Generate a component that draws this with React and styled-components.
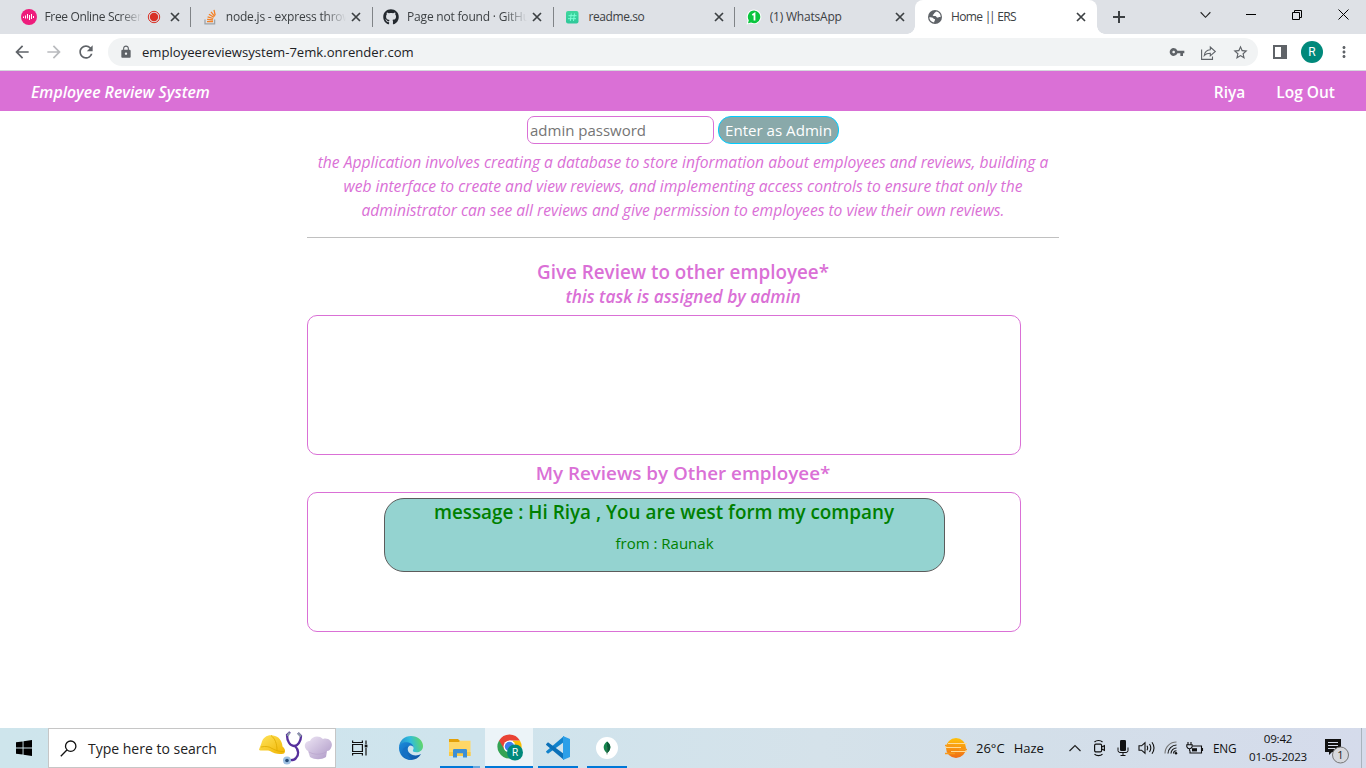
import React from 'react';
import styled, { createGlobalStyle, css } from 'styled-components';
import {
  MdArrowBack, MdArrowForward, MdRefresh, MdLock, MdVpnKey, MdStarBorder, MdMoreVert,
} from 'react-icons/md';
import { FaGithub } from 'react-icons/fa';

const Global = createGlobalStyle`
  * { box-sizing: border-box; }
  body { margin: 0; background: #fff; font-family: "Open Sans", "Noto Sans", sans-serif; overflow: hidden; }
  svg { display: block; flex: none; }
`;

const Screen = styled.div`
  width: 1366px;
  height: 768px;
  display: flex;
  flex-direction: column;
  background: #fff;
`;

/* ---------- browser ---------- */
const TabStrip = styled.div`
  height: 34px;
  display: flex;
  padding-left: 9px;
  background: #dee1e6;
`;
const Tab = styled.div`
  position: relative;
  width: 181.3px;
  height: 34px;
  display: flex;
  align-items: center;
  padding: 0 7.5px 0 11.5px;
  font-size: 12px;
  color: #3c4043;
  ${(p) => p.$active && css`
    background: #fff;
    border-radius: 8px 8px 0 0;
    &::before, &::after {
      content: "";
      position: absolute;
      bottom: 0;
      width: 8px;
      height: 8px;
    }
    &::before { left: -8px; background: radial-gradient(circle at 0 0, #dee1e6 7.5px, #fff 8px); }
    &::after { right: -8px; background: radial-gradient(circle at 100% 0, #dee1e6 7.5px, #fff 8px); }
  `}
  ${(p) => p.$divider && css`
    &::after {
      content: "";
      position: absolute;
      right: -1px;
      top: 7px;
      width: 1px;
      height: 20px;
      background: #808387;
    }
  `}
`;
const TabTitle = styled.span`
  flex: 1;
  min-width: 0;
  margin-left: 8px;
  overflow: hidden;
  white-space: nowrap;
  line-height: 18px;
  letter-spacing: ${(p) => p.$ls || 0}px;
  ${(p) => p.$fade && css`
    mask-image: linear-gradient(to right, #000 calc(100% - 22px), transparent 100%);
  `}
`;
const Pipes = styled.span`
  letter-spacing: -2.4px;
  margin-right: 1.5px;
`;
const TabEnd = styled.span`
  display: flex;
  align-items: center;
  gap: 9px;
  padding: 0 3px 0 5px;
`;
const NewTab = styled.div`
  width: 44px;
  display: flex;
  align-items: center;
  justify-content: center;
`;
const WindowButtons = styled.div`
  margin-left: auto;
  display: flex;
  height: 29px;
`;
const WindowButton = styled.div`
  width: 46px;
  display: flex;
  align-items: center;
  justify-content: center;
`;
const Toolbar = styled.div`
  height: 37px;
  display: flex;
  align-items: center;
  padding: 0 13px 0 12px;
  border-bottom: 1px solid #d5d8dc;
  color: #5f6368;
`;
const NavIcons = styled.div`
  display: flex;
  gap: 12px;
  width: 96px;
  color: #5f6368;
`;
const Address = styled.div`
  width: 1150px;
  height: 28px;
  border-radius: 14px;
  background: #f1f3f4;
  display: flex;
  align-items: center;
  padding: 0 9.5px 0 11px;
`;
const Url = styled.span`
  margin-left: 9px;
  flex: 1;
  font-size: 13.1px;
  color: #202124;
`;
const AddressIcons = styled.div`
  display: flex;
  align-items: center;
  gap: 15px;
`;
const ToolbarEnd = styled.div`
  margin-left: auto;
  display: flex;
  align-items: center;
`;
const Avatar = styled.div`
  width: 22px;
  height: 22px;
  margin: 0 12px 0 14px;
  border-radius: 50%;
  background: #00897b;
  color: #fff;
  font: 12px/22px Roboto, sans-serif;
  text-align: center;
`;

/* ---------- page ---------- */
const SiteHeader = styled.header`
  height: 40px;
  display: flex;
  align-items: center;
  padding: 1px 31px 0;
  background: #da70d6;
  color: #fff;
  font-size: 15.5px;
  font-weight: 600;
`;
const Brand = styled.span`
  font-size: 15.8px;
  font-style: italic;
`;
const SiteNav = styled.nav`
  margin-left: auto;
  display: flex;
  gap: 31px;
`;
const NavLink = styled.span`
  white-space: nowrap;
`;
const Main = styled.main`
  flex: 1;
  width: 752px;
  margin: 0 auto;
  padding-top: 5px;
  color: #da70d6;
`;
const AdminForm = styled.div`
  display: flex;
  justify-content: center;
  gap: 4px;
`;
const Field = styled.div`
  width: 187px;
  height: 28px;
  padding-left: 2px;
  border: 1px solid #da70d6;
  border-radius: 7px;
  color: #757575;
  font-size: 15px;
  line-height: 27px;
`;
const AdminButton = styled.div`
  width: 121px;
  height: 28px;
  border: 1px solid #00ccff;
  border-radius: 13px;
  background: #89a9aa;
  color: #fff;
  font-size: 15.1px;
  line-height: 27px;
  text-align: center;
`;
const Intro = styled.div`
  padding: 6px 0 15px;
  border-bottom: 1px solid #c0c0c0;
  font-size: 15.63px;
  font-style: italic;
  line-height: 24px;
  text-align: center;
`;
const IntroLine = styled.div`
  white-space: nowrap;
`;
const Heading = styled.h2`
  margin: ${(p) => p.$top}px 0 0;
  height: ${(p) => p.$h}px;
  line-height: ${(p) => p.$h}px;
  font-size: ${(p) => p.$size}px;
  font-weight: 600;
  font-style: ${(p) => (p.$italic ? 'italic' : 'normal')};
  text-align: center;
`;
const ReviewPanel = styled.section`
  width: 714px;
  height: 140px;
  margin-top: ${(p) => p.$top}px;
  padding-top: 5px;
  border: 1px solid #da70d6;
  border-radius: 10px;
`;
const ReviewCard = styled.article`
  width: 561px;
  height: 74px;
  margin: 0 auto;
  border: 1px solid #5c5c5c;
  border-radius: 20px;
  background: #94d3d0;
  color: #008000;
  text-align: center;
`;
const ReviewMessage = styled.div`
  font-size: 18.87px;
  font-weight: 600;
  line-height: 27px;
`;
const ReviewFrom = styled.div`
  margin-top: 5px;
  padding-left: 1px;
  font-size: 15px;
  line-height: 24px;
`;

/* ---------- taskbar ---------- */
const Taskbar = styled.footer`
  height: 40px;
  display: flex;
  background: linear-gradient(90deg, #cee5ec 0%, #cfe4ed 35%, #d5e2ea 60%, #d3dfe9 75%, #d5dbeb 100%);
  color: #111;
`;
const TaskSlot = styled.div`
  width: ${(p) => p.$w}px;
  display: flex;
  align-items: center;
  justify-content: center;
`;
const NotificationSlot = styled(TaskSlot)`
  padding: 5px 0 0 8px;
`;
const AppSlot = styled(TaskSlot)`
  margin-left: ${(p) => p.$ml || 0}px;
  background: ${(p) => (p.$active ? '#ecf4f8' : 'transparent')};
  border-bottom: 2px solid ${(p) => (p.$open ? '#0078d7' : 'transparent')};
  padding-top: 2px;
  ${(p) => p.$stacked && css`border-image: linear-gradient(90deg, #0078d7 80%, #66a8e0 80%) 2;`}
`;
const SearchBox = styled.div`
  width: 288px;
  border: 1px solid #c6c6c6;
  background: #fff;
  display: flex;
  align-items: center;
  padding: 0 2px 0 11px;
  font-size: 14px;
  color: #222;
`;
const SearchText = styled.span`
  margin-left: 11px;
  flex: 1;
`;
const Tray = styled.div`
  margin-left: auto;
  display: flex;
  align-items: center;
  font-size: 13px;
`;
const Weather = styled.div`
  display: flex;
  align-items: center;
  width: 118px;
`;
const WeatherText = styled.span`
  margin-left: ${(p) => p.$ml}px;
`;
const Language = styled.span`
  width: 35px;
  padding-left: 6px;
  font-size: 11.8px;
  letter-spacing: -0.2px;
`;
const Clock = styled.div`
  width: 71px;
  padding-left: 1px;
  font-size: 11.6px;
  line-height: 18px;
  text-align: center;
  letter-spacing: -0.25px;
`;
const ShowDesktop = styled.div`
  width: 5px;
  height: 40px;
  margin-left: 8px;
  border-left: 1px solid #a9b4bd;
`;

/* ---------- icons ---------- */
const Cross = () => (
  <svg width="10" height="10" viewBox="0 0 10 10" stroke="#3c4043" strokeWidth="1.7"><path d="M1 1l8 8M9 1l-8 8" /></svg>
);
const Recording = () => (
  <svg width="14" height="14" viewBox="0 0 14 14"><circle cx="7" cy="7" r="5.7" fill="none" stroke="#d93025" strokeWidth="1" /><circle cx="7" cy="7" r="4.2" fill="#d93025" /></svg>
);
const RecorderLogo = () => (
  <svg width="16" height="16" viewBox="0 0 16 16"><circle cx="8" cy="8" r="8" fill="#ee1c7c" /><path d="M2.500 7.500v1.500M4.500 6.500v3M6.500 5v4.500M8.500 6v5M10.500 5v5M12.500 7v2" stroke="#fff" strokeWidth="1" /></svg>
);
const StackOverflow = () => (
  <svg width="16" height="16" viewBox="0 0 16 16" fill="none"><path d="M3 10.500v4.300h9.600v-4.300" stroke="#9da3a8" strokeWidth="1.3" /><path d="M5 12.700h6M5.100 10.400l5.900.6M5.600 7.900l5.600 1.600M6.900 5.200l5 3M9 2.800l3.700 4.500M12 .8l1.200 5.500" stroke="#f48024" strokeWidth="1.3" /></svg>
);
const ReadmeLogo = () => (
  <svg width="16" height="16" viewBox="0 0 16 16"><defs><linearGradient id="rd" x1="0" y1="0" x2="0" y2="1"><stop offset="0" stopColor="#3fd79d" /><stop offset="1" stopColor="#2fc79a" /></linearGradient></defs><rect x="2" y="2" width="12.5" height="12.5" rx="2" fill="url(#rd)" /><path d="M7.300 4.500L6.300 12M10.500 4.500L9.500 12M4.500 6.700h8M4 9.700h8" stroke="#7dffd5" strokeWidth="1" /></svg>
);
const WhatsAppBadge = () => (
  <svg width="16" height="16" viewBox="0 0 16 16"><path d="M8 .5a7.400 7.400 0 1 1-3.200 14.100L.6 15.500l1-4A7.400 7.400 0 0 1 8 .5z" fill="#fff" /><path d="M8.100 1.600a6.300 6.300 0 1 1-3 11.900L2 14.200l.8-3A6.300 6.300 0 0 1 8.100 1.600z" fill="#0ac53f" /><path d="M6.300 6l2.200-1.400v7" fill="none" stroke="#fff" strokeWidth="1.800" /></svg>
);
const Globe = () => (
  <svg width="16" height="16" viewBox="0 0 16 16"><circle cx="8" cy="8" r="7" fill="#5f6368" /><path d="M2.300 8.200C4 8.300 5.800 8.200 6.500 9.400c.4.800 1.600.4 1.600 1.400 0 1-1 1-1 2.600 C4.200 13 2.300 10.800 2.300 8.200zM9 2.400c-.2 1-1.700 1-1.900 2.100-.1 1-1.300.8-1.400 1.700 0 .9 1.600.7 2.600.7 1.200 0 .9 1.500 2 1.700 1.200.3 1.500-.9 3.300-.4C14 5.200 12 2.700 9 2.400z" fill="#fff" /></svg>
);
const Share = () => (
  <svg width="17" height="17" viewBox="0 0 17 17" fill="none" stroke="#5f6368" strokeWidth="1.100"><path d="M1.600 5.500v9.900h10.900v-3" /><path d="M4.300 11.500c.5-3.600 2.700-5.500 6-5.700V3l5 4.500-5 4.300V9.200c-2.600 0-4.500.6-6 2.300z" /></svg>
);
const SidePanel = () => (
  <svg width="14" height="14" viewBox="0 0 14 14"><path fill="#5f6368" fillRule="evenodd" d="M0 0h14v14H0zM2 2v10h6V2z" /></svg>
);
const WindowsLogo = () => (
  <svg width="16" height="16" viewBox="0 0 16 16"><path d="M0 2.300L6.600 1.400v6.100H0zM7.500 1.300L16 .1v7.400H7.500zM0 8.500h6.600v6.100L0 13.700zM7.500 8.500H16v7.400l-8.500-1.200z" /></svg>
);
const SearchGlyph = () => (
  <svg width="17" height="17" viewBox="0 0 17 17" fill="none" stroke="#111" strokeWidth="1.300"><circle cx="10.700" cy="6.200" r="5.200" /><path d="M6.900 10L.8 16.200" /></svg>
);
const SearchArt = () => (
  <svg width="74" height="36" viewBox="0 0 74 36">
    <defs>
      <linearGradient id="hat" x1="0" y1="0" x2="1" y2="1"><stop offset="0" stopColor="#ffe45c" /><stop offset="1" stopColor="#f0b400" /></linearGradient>
      <linearGradient id="chef" x1="0" y1="0" x2="1" y2="1"><stop offset="0" stopColor="#eee6f5" /><stop offset="1" stopColor="#ad98c6" /></linearGradient>
    </defs>
    <path d="M0 20C.5 17 2 15 2.500 13 4 7 9 4.500 14 5.500c6 1 9 5 9.500 11 2.500 2 3.500 5 1.500 7-5 1.500-10 0-14-2.500-4-1.500-8 .5-11-1z" fill="url(#hat)" />
    <path d="M12 5.500c4 3 6 8 6 15M2 17c5-1 8-.5 11 1.500 4 2 8 3.500 12 3" stroke="#dda900" strokeWidth=".8" fill="none" />
    <path d="M31 2l-3 3c0 6 3 11 7 11s7-5 7-10l-3-3M36 16c4 4 4 9 1 12-2 3-5 2-8 2" fill="none" stroke="#56309c" strokeWidth="2.300" />
    <path d="M28.500 6l2-3.500M42 6.500L39 3" stroke="#8c99a8" strokeWidth="2.200" />
    <circle cx="28" cy="30.500" r="4" fill="#9dc0e2" /><circle cx="28" cy="30.500" r="1.800" fill="#244b78" />
    <path d="M49 21c-5-3-4-10 2-10 2-5 9-6 13-2 6-2 11 4 8 9-1 2-2 3-4 3l-1 6c-5 3-11 3-16 0z" fill="url(#chef)" />
    <path d="M50 22c5 3 12 3 17 0" stroke="#b5a1ca" strokeWidth=".6" fill="none" />
  </svg>
);
const TaskView = () => (
  <svg width="18" height="16" viewBox="0 0 18 16" fill="none" stroke="#111" strokeWidth="1.200"><path d="M1.600 4.500h9.800v7H1.600zM1.600 .5v2h9.800v-2M1.600 15.500v-2h9.800v2M15 .5v3.700M15 8v7.500" /><path d="M13.700 4.700h2.700v2.700h-2.700z" fill="#111" stroke="none" /></svg>
);
const EdgeLogo = () => (
  <svg width="24" height="24" viewBox="0 0 24 24">
    <defs>
      <linearGradient id="e1" x1="0" y1=".5" x2="1" y2=".3"><stop offset="0" stopColor="#2489d0" /><stop offset=".5" stopColor="#31bddb" /><stop offset="1" stopColor="#66d95b" /></linearGradient>
      <linearGradient id="e2" x1="0" y1="0" x2="1" y2="1"><stop offset="0" stopColor="#1b8bdc" /><stop offset="1" stopColor="#0c4fa0" /></linearGradient>
    </defs>
    <path d="M0 11C.5 4.500 5.500 0 12 0c7 0 12 4.700 12 10 0 4-3 6.300-6.500 6.300-2.500 0-4.200-1-3.500-2.300 1.500-2 .6-6.300-4-6.300C5 7.700 1 9.500 0 11z" fill="url(#e1)" />
    <path d="M0 12c0-4 4-6.300 8-5.800 4.300.3 7 3.300 6.700 6-.2-1.400-1.600-2.600-3.300-2.600C8.500 10 8 14 10 16.500c3 3.600 8.500 3.600 12 1.600C20 22 16 24 12 24 5 24 0 18.500 0 12z" fill="url(#e2)" />
    <path d="M9.500 10.500C6 13 7.500 21 14 23.800 8 24.500 3 20 3.300 15.500c.1-3 2.700-5 6.200-5z" fill="#1470c4" />
  </svg>
);
const FolderLogo = () => (
  <svg width="22" height="19" viewBox="0 0 22 19"><path d="M0 0h9l2 2v4H0z" fill="#e3a008" /><path d="M0 3h10l1-1.300h10.500V17H0z" fill="#ffd766" /><path d="M0 13h21.500v4H0z" fill="#f9c944" /><path d="M4 18.500v-7.300q0-1.200 1.200-1.200h11.600q1.200 0 1.200 1.200v7.300h-4v-4.300H8v4.300z" fill="#3c8fd5" /></svg>
);
const ChromeLogo = () => (
  <svg width="28" height="28" viewBox="0 0 28 28">
    <path d="M4.100 6.500a12 12 0 0 0 10.400 18l5.200-9-5.200-3z" fill="#34a353" />
    <path d="M24.900 6.500a12 12 0 0 1-10.400 18l5.200-9-2-9z" fill="#fbbc05" />
    <path d="M14.500 6.500h10.400a12 12 0 0 0-20.800 0l5.200 9z" fill="#e94335" />
    <circle cx="14.500" cy="12.500" r="6" fill="#fff" /><circle cx="14.500" cy="12.500" r="4.700" fill="#3b7ded" />
    <circle cx="20" cy="18.500" r="8" fill="#00897b" />
    <text x="20" y="22.200" fill="#fff" fontFamily="Roboto, sans-serif" fontSize="10" textAnchor="middle">R</text>
  </svg>
);
const CodeLogo = () => (
  <svg width="24" height="24" viewBox="0 0 24 24"><path d="M0 16l2 1.700L18 6V0L.2 15.200z" fill="#1283cc" /><path d="M0 8.200l2-1.900L18 18v6L.2 9z" fill="#0b70b8" /><path d="M17 0l7 3v18l-7 3z" fill="#2b9fe8" /></svg>
);
const MongoLogo = () => (
  <svg width="22" height="22" viewBox="0 0 22 22"><circle cx="11" cy="11" r="11" fill="#fff" /><path d="M11 4.500c4 3 4.800 7.500.2 11.400h-.4C6.200 12 7 7.500 11 4.500z" fill="#14854c" /><path d="M11 4.500c4 3 4.800 7.500.2 11.400z" fill="#0a5a38" /><path d="M11 10v7.500" stroke="#46725a" strokeWidth=".7" /></svg>
);
const HazeSun = () => (
  <svg width="23" height="22" viewBox="0 0 23 22"><defs><linearGradient id="sun" x1="0" y1="0" x2="0" y2="1"><stop offset="0" stopColor="#ffc20a" /><stop offset="1" stopColor="#ef6b17" /></linearGradient></defs><circle cx="11" cy="11" r="10" fill="url(#sun)" /><path d="M3 6.500h19M0 10.500h16M6 14.500h16" stroke="#ffdc98" strokeWidth="1.200" /><path d="M0 8.500h9M14 12.500h8M0 16.500h10" stroke="#f79a1c" strokeWidth="1.500" /></svg>
);
const Chevron = ({ up, size = 12 }) => (
  <svg width={size} height="8" viewBox="0 0 12 8" fill="none" stroke="#222" strokeWidth="1.200"><path d={up ? 'M.5 7L6 1.500 11.500 7' : 'M.7 1L6 6.500 11.300 1'} /></svg>
);
const MeetNow = () => (
  <svg width="14" height="18" viewBox="0 0 14 18" fill="none" stroke="#111" strokeWidth="1.200"><rect x="2.600" y="5.100" width="7" height="7.800" rx="1.300" /><path d="M9.600 8l2.800-1.300v4.600L9.600 10M2.500 3C4.500 1 8.500 1 10.500 3M2.500 15.200c2 2 6 2 8 0" /></svg>
);
const Mic = () => (
  <svg width="12" height="16" viewBox="0 0 12 16"><rect x="3" y="0" width="6" height="11" rx="1.300" fill="#111" /><path d="M1 7.500v3q0 2 2 2h6q2 0 2-2v-3M6 12.500V15.500M3.500 15.500h5" fill="none" stroke="#111" strokeWidth="1" /></svg>
);
const Speaker = () => (
  <svg width="18" height="14" viewBox="0 0 18 14" fill="none" stroke="#111" strokeWidth="1.100"><path d="M1 4.800h2.500L7 1.800v10.400l-3.500-3H1zM9 4.800q1.300 2.200 0 4.400M11.500 3q2.600 4 0 8M14 1.300q4 5.700 0 11.400" /></svg>
);
const Wifi = () => (
  <svg width="14" height="14" viewBox="0 0 14 14" fill="none" stroke="#111" strokeWidth="1.100"><path d="M1 12.500C1 6 6 1 12.500 1" stroke="#777" /><path d="M4 12.500C4 8 8 4 12.500 4M7 12.500C7 9.500 9.500 7 12.500 7M9.500 12.500q0-2.800 3-2.800" /><circle cx="12" cy="12.300" r="1.200" fill="#111" stroke="none" /></svg>
);
const Battery = () => (
  <svg width="18" height="13" viewBox="0 0 18 13" fill="none" stroke="#111" strokeWidth="1.100"><path d="M7 4h8.500v7H4V8.500M16.500 6v3M2 0v2.500M5 0v2.500M.8 2.700h5.400v2q-.8 2-2.700 2t-2.700-2zM3.500 6.700v2" /><path d="M6 6.200h5v3.200H6z" fill="#111" stroke="none" /></svg>
);
const Notifications = () => (
  <svg width="26" height="26" viewBox="0 0 26 26"><path d="M1 1h16v13H8l-3 3v-3H1z" fill="#111" /><path d="M4 4.500h10M4 7.500h10M4 10.500h7" stroke="#d5dbea" strokeWidth="1" /><circle cx="16.500" cy="17" r="8" fill="#d6d8dd" stroke="#777" /><text x="16.500" y="20.800" fontSize="11" fill="#222" textAnchor="middle" fontFamily="Open Sans">1</text></svg>
);

const tabs = [
  { id: 'recorder', icon: <RecorderLogo />, title: 'Free Online Screen', fade: true, ls: -0.35, rec: true, divider: true },
  { id: 'node', icon: <StackOverflow />, title: 'node.js - express throw', fade: true, ls: -0.2, divider: true },
  { id: 'github', icon: <FaGithub size={16} color="#24292f" />, title: 'Page not found · GitHu', fade: true, ls: -0.2, divider: true },
  { id: 'readme', icon: <ReadmeLogo />, title: 'readme.so', ls: -0.4, divider: true },
  { id: 'whatsapp', icon: <WhatsAppBadge />, title: '(1) WhatsApp', ls: -0.2 },
  { id: 'home', icon: <Globe />, title: <>Home <Pipes>||</Pipes> ERS</>, ls: -0.65, active: true },
];
const intro = [
  'the Application involves creating a database to store information about employees and reviews, building a',
  'web interface to create and view reviews, and implementing access controls to ensure that only the',
  'administrator can see all reviews and give permission to employees to view their own reviews.',
];

export default function App() {
  return (
    <Screen>
      <Global />
      <TabStrip>
        {tabs.map((t) => (
          <Tab key={t.id} $active={t.active} $divider={t.divider}>
            {t.icon}
            <TabTitle $fade={t.fade} $ls={t.ls}>{t.title}</TabTitle>
            <TabEnd>{t.rec && <Recording />}<Cross /></TabEnd>
          </Tab>
        ))}
        <NewTab><svg width="12" height="12" viewBox="0 0 12 12" stroke="#3c4043" strokeWidth="2"><path d="M6 0v12M0 6h12" /></svg></NewTab>
        <WindowButtons>
          <WindowButton><Chevron size={11} /></WindowButton>
          <WindowButton><svg width="10" height="10" viewBox="0 0 10 10" stroke="#000"><path d="M0 4.500h10" /></svg></WindowButton>
          <WindowButton><svg width="10" height="10" viewBox="0 0 10 10" stroke="#000" fill="none"><path d="M.5 2.500h7v7h-7zM2.500 2.500v-2h7v7h-2" /></svg></WindowButton>
          <WindowButton><svg width="11" height="11" viewBox="0 0 11 11" stroke="#000"><path d="M.5 .5l10 10M10.500 .5l-10 10" /></svg></WindowButton>
        </WindowButtons>
      </TabStrip>
      <Toolbar>
        <NavIcons>
          <MdArrowBack size={20} />
          <MdArrowForward size={20} color="#b9bbbe" />
          <MdRefresh size={20} />
        </NavIcons>
        <Address>
          <MdLock size={14} />
          <Url>employeereviewsystem-7emk.onrender.com</Url>
          <AddressIcons><MdVpnKey size={16} /><Share /><MdStarBorder size={17} /></AddressIcons>
        </Address>
        <ToolbarEnd>
          <SidePanel />
          <Avatar>R</Avatar>
          <MdMoreVert size={18} />
        </ToolbarEnd>
      </Toolbar>

      <SiteHeader>
        <Brand>Employee Review System</Brand>
        <SiteNav><NavLink>Riya</NavLink><NavLink>Log Out</NavLink></SiteNav>
      </SiteHeader>
      <Main>
        <AdminForm>
          <Field>admin password</Field>
          <AdminButton>Enter as Admin</AdminButton>
        </AdminForm>
        <Intro>
          {intro.map((line) => <IntroLine key={line}>{line}</IntroLine>)}
        </Intro>
        <Heading $top={21} $h={26} $size={18.83}>Give Review to other employee*</Heading>
        <Heading $top={0} $h={24} $size={17.25} $italic>this task is assigned by admin</Heading>
        <ReviewPanel $top={6} />
        <Heading $top={5} $h={26} $size={18.82}>My Reviews by Other employee*</Heading>
        <ReviewPanel $top={6}>
          <ReviewCard>
            <ReviewMessage>message : Hi Riya , You are west form my company</ReviewMessage>
            <ReviewFrom>from : Raunak</ReviewFrom>
          </ReviewCard>
        </ReviewPanel>
      </Main>

      <Taskbar>
        <TaskSlot $w={48}><WindowsLogo /></TaskSlot>
        <SearchBox><SearchGlyph /><SearchText>Type here to search</SearchText><SearchArt /></SearchBox>
        <TaskSlot $w={48}><TaskView /></TaskSlot>
        <AppSlot $w={48} $ml={3}><EdgeLogo /></AppSlot>
        <AppSlot $w={40} $ml={5} $open $stacked><FolderLogo /></AppSlot>
        <AppSlot $w={48} $ml={5} $open $active><ChromeLogo /></AppSlot>
        <AppSlot $w={40} $ml={5} $open><CodeLogo /></AppSlot>
        <AppSlot $w={40} $ml={9} $open><MongoLogo /></AppSlot>
        <Tray>
          <Weather><HazeSun /><WeatherText $ml={8}>26°C</WeatherText><WeatherText $ml={9}>Haze</WeatherText></Weather>
          <TaskSlot $w={24}><Chevron up /></TaskSlot>
          <TaskSlot $w={24}><MeetNow /></TaskSlot>
          <TaskSlot $w={24}><Mic /></TaskSlot>
          <TaskSlot $w={24}><Speaker /></TaskSlot>
          <TaskSlot $w={24}><Wifi /></TaskSlot>
          <TaskSlot $w={24}><Battery /></TaskSlot>
          <Language>ENG</Language>
          <Clock>09:42<br />01-05-2023</Clock>
          <NotificationSlot $w={40}><Notifications /></NotificationSlot>
          <ShowDesktop />
        </Tray>
      </Taskbar>
    </Screen>
  );
}
